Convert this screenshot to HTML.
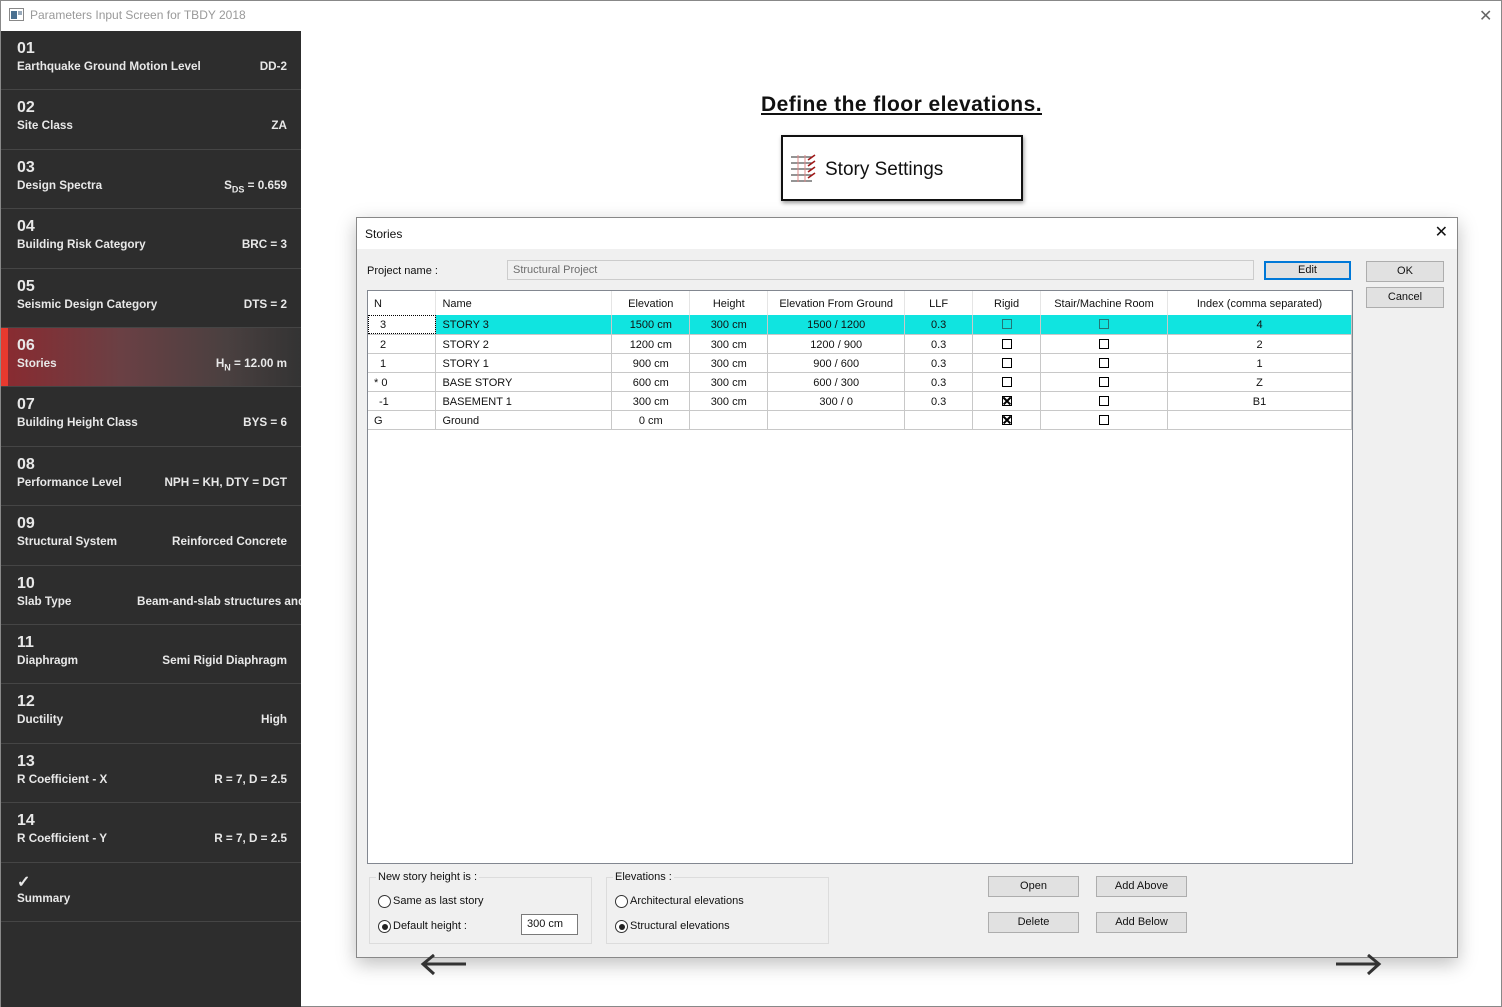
<!DOCTYPE html>
<html><head><meta charset="utf-8"><style>
*{margin:0;padding:0;box-sizing:border-box}
body{width:1502px;height:1007px;position:relative;background:#fff;font-family:"Liberation Sans",sans-serif;overflow:hidden}
.abs{position:absolute}
.win{position:absolute;left:0;top:0;width:1502px;height:1007px;border:1px solid #888}
.title{position:absolute;left:30px;top:8px;font-size:12px;color:#999}
.side{position:absolute;left:1px;top:31px;width:300px;height:976px;background:#2d2d2d}
.it{position:absolute;left:0;width:300px;height:59.4px;border-bottom:1px solid #454545;color:#e8e8e8;font-weight:bold}
.it .n{position:absolute;left:16px;top:9px;font-size:16px}
.it .l{position:absolute;left:16px;top:29px;font-size:11.7px}
.it .v{position:absolute;right:14px;top:29px;font-size:11.7px;white-space:nowrap}
.act{background:linear-gradient(90deg,#8a2a30 0%,#6a4044 40%,#4a4040 75%,#333 100%)}
.act::before{content:"";position:absolute;left:0;top:0;width:7px;height:100%;background:#e8392e}
.h1{position:absolute;left:761px;top:93px;font-size:21px;letter-spacing:0.45px;font-weight:bold;text-decoration:underline;color:#111}
.ss{position:absolute;left:781px;top:135px;width:242px;height:66px;border:2px solid #111;box-shadow:1px 2px 4px rgba(0,0,0,.4);background:#fff}
.ss span{position:absolute;left:42px;top:22px;font-size:19px;color:#111}
.dlg{position:absolute;left:356px;top:217px;width:1102px;height:741px;background:#f0f0f0;border:1px solid #888;box-shadow:0 6px 18px rgba(0,0,0,.25);font-size:11px;color:#111}
.dt{position:absolute;left:0;top:0;width:100%;height:31px;background:#fff}
.btn{position:absolute;background:#e1e1e1;border:1px solid #adadad;text-align:center;font-size:11px;line-height:17px}
.grid{position:absolute;left:10px;top:72px;width:986px;height:574px;background:#fff;border:1px solid #828790}
table{border-collapse:collapse;table-layout:fixed;position:absolute;left:0;top:0}
td{height:19px;border-right:1px solid #c8c8c8;border-bottom:1px solid #c8c8c8;text-align:center;font-size:11px;white-space:nowrap;overflow:hidden;padding-top:2px}
tr.hd td{height:24px;border-bottom:none;border-right:1px solid #e5e5e5}
td.lft{text-align:left;padding-left:6px}
tr.sel td{background:#10e4e0}
.cb{display:inline-block;width:10px;height:10px;border:1px solid #000;vertical-align:middle;position:relative;top:-1px}
.cb.x::before,.cb.x::after{content:"";position:absolute;left:-1px;top:3px;width:10px;height:1.5px;background:#000;transform:rotate(45deg)}
.cb.x::after{transform:rotate(-45deg)}
.grp{position:absolute;border:1px solid #dcdcdc}
.grp .lg{position:absolute;left:6px;top:-7px;background:#f0f0f0;padding:0 2px}
.rad{position:absolute;width:13px;height:13px;border:1px solid #333;border-radius:50%;background:#fff}
.rad.on::after{content:"";position:absolute;left:2.5px;top:2.5px;width:6px;height:6px;border-radius:50%;background:#222}
</style></head><body>
<div class="win"></div>
<svg class="abs" style="left:9px;top:8px" width="15" height="13"><rect x="0.5" y="0.5" width="14" height="12" fill="#fff" stroke="#888"/><rect x="2" y="3" width="6" height="8" fill="#4a7090"/><rect x="9" y="3" width="4" height="4" fill="#9ab"/></svg>
<div class="title">Parameters Input Screen for TBDY 2018</div>
<div class="abs" style="left:1479px;top:6px;font-size:16px;color:#666">✕</div>
<div class="side">
<div class="it" style="top:0"><div class="n">01</div><div class="l">Earthquake Ground Motion Level</div><div class="v">DD-2</div></div>
<div class="it" style="top:59.4px"><div class="n">02</div><div class="l">Site Class</div><div class="v">ZA</div></div>
<div class="it" style="top:118.8px"><div class="n">03</div><div class="l">Design Spectra</div><div class="v">S<sub style="font-size:9px">DS</sub> = 0.659</div></div>
<div class="it" style="top:178.2px"><div class="n">04</div><div class="l">Building Risk Category</div><div class="v">BRC = 3</div></div>
<div class="it" style="top:237.6px"><div class="n">05</div><div class="l">Seismic Design Category</div><div class="v">DTS = 2</div></div>
<div class="it act" style="top:297px"><div class="n">06</div><div class="l">Stories</div><div class="v">H<sub style="font-size:9px">N</sub> = 12.00 m</div></div>
<div class="it" style="top:356.4px"><div class="n">07</div><div class="l">Building Height Class</div><div class="v">BYS = 6</div></div>
<div class="it" style="top:415.8px"><div class="n">08</div><div class="l">Performance Level</div><div class="v">NPH = KH, DTY = DGT</div></div>
<div class="it" style="top:475.2px"><div class="n">09</div><div class="l">Structural System</div><div class="v">Reinforced Concrete</div></div>
<div class="it" style="top:534.6px;overflow:hidden"><div class="n">10</div><div class="l">Slab Type</div><div class="v" style="left:136px;right:auto">Beam-and-slab structures and</div></div>
<div class="it" style="top:594px"><div class="n">11</div><div class="l">Diaphragm</div><div class="v">Semi Rigid Diaphragm</div></div>
<div class="it" style="top:653.4px"><div class="n">12</div><div class="l">Ductility</div><div class="v">High</div></div>
<div class="it" style="top:712.8px"><div class="n">13</div><div class="l">R Coefficient - X</div><div class="v">R = 7, D = 2.5</div></div>
<div class="it" style="top:772.2px"><div class="n">14</div><div class="l">R Coefficient - Y</div><div class="v">R = 7, D = 2.5</div></div>
<div class="it" style="top:831.6px"><div class="n">✓</div><div class="l">Summary</div></div>
</div>
<div class="h1">Define the floor elevations.</div>
<div class="ss"><svg class="abs" style="left:7px;top:17px" width="28" height="30"><g stroke="#555" stroke-width="1.3"><line x1="1" y1="3" x2="22" y2="3"/><line x1="1" y1="9" x2="22" y2="9"/><line x1="1" y1="15" x2="22" y2="15"/><line x1="1" y1="21" x2="22" y2="21"/><line x1="1" y1="27" x2="22" y2="27"/></g><g stroke="#d88" stroke-width="1"><line x1="8" y1="1" x2="8" y2="28"/><line x1="15" y1="1" x2="15" y2="28"/></g><g stroke="#a01818" stroke-width="1.6"><line x1="18" y1="6" x2="25" y2="1"/><line x1="18" y1="12" x2="25" y2="7"/><line x1="18" y1="18" x2="25" y2="13"/><line x1="18" y1="24" x2="25" y2="19"/></g></svg><span>Story Settings</span></div>

<div class="dlg">
<div class="dt"><div class="abs" style="left:8px;top:9px;font-size:12px">Stories</div><div class="abs" style="right:9px;top:4px;font-size:16px">✕</div></div>
<div class="abs" style="left:10px;top:47px">Project name :</div>
<div class="abs" style="left:150px;top:42px;width:747px;height:20px;border:1px solid #ccc;background:#f0f0f0;color:#6d6d6d;padding:3px 5px">Structural Project</div>
<div class="btn" style="left:907px;top:43px;width:87px;height:19px;border:2px solid #0078d7;line-height:15px">Edit</div>
<div class="btn" style="left:1009px;top:43px;width:78px;height:21px;line-height:19px">OK</div>
<div class="btn" style="left:1009px;top:69px;width:78px;height:21px;line-height:19px">Cancel</div>
<div class="grid"><table>
<colgroup><col style="width:68px"><col style="width:176px"><col style="width:78px"><col style="width:78px"><col style="width:137px"><col style="width:68px"><col style="width:68px"><col style="width:127px"><col style="width:184px"></colgroup>
<tr class="hd"><td class="lft">N</td><td class="lft">Name</td><td>Elevation</td><td>Height</td><td>Elevation From Ground</td><td>LLF</td><td>Rigid</td><td>Stair/Machine Room</td><td>Index (comma separated)</td></tr>
<tr class="sel"><td style="background:#fff;text-align:left;padding-left:12px;outline:1px dotted #000;outline-offset:-1px">3</td><td class="lft">STORY 3</td><td>1500 cm</td><td>300 cm</td><td>1500 / 1200</td><td>0.3</td><td><span class="cb" style="border-color:#277"></span></td><td><span class="cb" style="border-color:#277"></span></td><td>4</td></tr>
<tr><td class="lft" style="padding-left:12px">2</td><td class="lft">STORY 2</td><td>1200 cm</td><td>300 cm</td><td>1200 / 900</td><td>0.3</td><td><span class="cb"></span></td><td><span class="cb"></span></td><td>2</td></tr>
<tr><td class="lft" style="padding-left:12px">1</td><td class="lft">STORY 1</td><td>900 cm</td><td>300 cm</td><td>900 / 600</td><td>0.3</td><td><span class="cb"></span></td><td><span class="cb"></span></td><td>1</td></tr>
<tr><td class="lft">* 0</td><td class="lft">BASE STORY</td><td>600 cm</td><td>300 cm</td><td>600 / 300</td><td>0.3</td><td><span class="cb"></span></td><td><span class="cb"></span></td><td>Z</td></tr>
<tr><td class="lft" style="padding-left:11px">-1</td><td class="lft">BASEMENT 1</td><td>300 cm</td><td>300 cm</td><td>300 / 0</td><td>0.3</td><td><span class="cb x"></span></td><td><span class="cb"></span></td><td>B1</td></tr>
<tr><td class="lft">G</td><td class="lft">Ground</td><td>0 cm</td><td></td><td></td><td></td><td><span class="cb x"></span></td><td><span class="cb"></span></td><td></td></tr>
</table></div>
<div class="grp" style="left:12px;top:659px;width:223px;height:67px"><div class="lg">New story height is :</div></div>
<div class="rad" style="left:21px;top:677px"></div><div class="abs" style="left:36px;top:677px">Same as last story</div>
<div class="rad on" style="left:21px;top:702px"></div><div class="abs" style="left:36px;top:702px">Default height :</div>
<div class="abs" style="left:164px;top:696px;width:57px;height:21px;background:#fff;border:1px solid #7a7a7a;padding:3px 5px">300 cm</div>
<div class="grp" style="left:249px;top:659px;width:223px;height:67px"><div class="lg">Elevations :</div></div>
<div class="rad" style="left:258px;top:677px"></div><div class="abs" style="left:273px;top:677px">Architectural elevations</div>
<div class="rad on" style="left:258px;top:702px"></div><div class="abs" style="left:273px;top:702px">Structural elevations</div>
<div class="btn" style="left:631px;top:658px;width:91px;height:21px;line-height:19px">Open</div>
<div class="btn" style="left:739px;top:658px;width:91px;height:21px;line-height:19px">Add Above</div>
<div class="btn" style="left:631px;top:694px;width:91px;height:21px;line-height:19px">Delete</div>
<div class="btn" style="left:739px;top:694px;width:91px;height:21px;line-height:19px">Add Below</div>
</div>
<svg class="abs" style="left:420px;top:954px" width="48" height="28"><path d="M46 10H4M14 1L3 10L14 20" fill="none" stroke="#333" stroke-width="3"/></svg>
<svg class="abs" style="left:1334px;top:954px" width="48" height="28"><path d="M2 10H44M34 1L45 10L34 20" fill="none" stroke="#333" stroke-width="3"/></svg>
</body></html>
